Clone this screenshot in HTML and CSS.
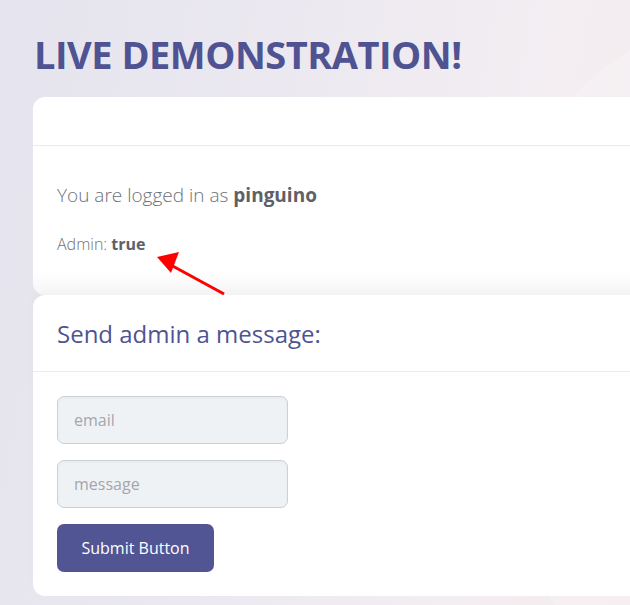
FILE: index.html
```html
<!DOCTYPE html>
<html>
<head>
<meta charset="utf-8">
<link rel="stylesheet" href="styles.css">
</head>
<body>
<div class="bg-shape"></div>
<main class="page">
  <h1 class="title">LIVE DEMONSTRATION!</h1>
  <section class="card card-status">
    <div class="card-header"></div>
    <div class="card-body">
      <p class="logged">You are logged in as <b>pinguino</b></p>
      <p class="admin">Admin: <b>true</b></p>
    </div>
    <svg class="arrow" width="80" height="50" viewBox="0 0 80 50">
      <line x1="69" y1="46" x2="14" y2="16" stroke="#ff0000" stroke-width="3"/>
      <polygon points="2,9 24,4 16,25" fill="#ff0000"/>
    </svg>
  </section>
  <section class="card card-form">
    <div class="card-header form-header">
      <h2 class="form-title">Send admin a message:</h2>
    </div>
    <form class="card-body form-body">
      <input class="field" type="text" placeholder="email">
      <input class="field" type="text" placeholder="message">
      <button class="submit" type="button">Submit Button</button>
    </form>
  </section>
</main>
</body>
</html>
```
FILE: styles.css
```css
html, body {
  margin: 0;
  padding: 0;
  width: 630px;
  height: 605px;
  overflow: hidden;
}
body {
  font-family: "Open Sans", "Noto Sans", sans-serif;
  background: linear-gradient(100deg, #e5e4ee 0%, #ebe8f0 40%, #f3eef2 75%, #f3ecef 100%);
  position: relative;
}
.bg-shape {
  position: absolute;
  left: 470px;
  top: 10px;
  width: 600px;
  height: 700px;
  border-radius: 50%;
  background: rgba(255,255,255,0.18);
}
.page {
  position: relative;
  padding: 0 0 0 33px;
  width: 597px;
  height: 605px;
  overflow: hidden;
}
.title {
  margin: 0;
  padding: 30px 0 0 1px;
  height: 97px;
  box-sizing: border-box;
  font-size: 38px;
  line-height: 48px;
  font-weight: 700;
  color: #4f5392;
  letter-spacing: -0.5px;
  white-space: nowrap;
}
.card {
  background: #fff;
  border-radius: 12px;
  position: relative;
  width: 680px;
}
.card-status {
  height: 198px;
  box-sizing: border-box;
  background: linear-gradient(#fff 0%, #fff 88%, #f7f7f8 100%);
}
.card-header {
  height: 48px;
  border-bottom: 1px solid #ebebee;
}
.card-body {
  padding: 24px 24px;
}
.logged {
  margin: 12px 0 0;
  font-size: 19px;
  line-height: 26px;
  font-weight: 300;
  color: #6e7177;
}
.logged b, .admin b {
  font-weight: 700;
  color: #5d6167;
}
.admin {
  margin: 25px 0 0;
  font-size: 16px;
  line-height: 22px;
  font-weight: 300;
  color: #6e7177;
}
.arrow {
  position: absolute;
  left: 122px;
  top: 151px;
}
.card-form {
  height: 301px;
  box-sizing: border-box;
  box-shadow: 0 -6px 14px rgba(0,0,0,0.025);
}
.form-header {
  height: 77px;
  box-sizing: border-box;
  display: flex;
  align-items: center;
  padding: 0 24px;
}
.form-title {
  margin: 0;
  font-size: 24px;
  font-weight: 400;
  color: #4f5392;
}
.form-body {
  display: flex;
  flex-direction: column;
  align-items: flex-start;
  gap: 16px;
  padding-top: 24px;
}
.field {
  width: 231px;
  height: 48px;
  box-sizing: border-box;
  border: 1px solid #cdd0d4;
  border-radius: 7px;
  background: #eff2f5;
  padding: 0 16px;
  font-family: "Open Sans", sans-serif;
  font-size: 16px;
  color: #555;
  box-shadow: inset 0 1px 3px rgba(0,0,0,0.04);
}
.field::placeholder {
  color: #a3a6ab;
}
.submit {
  width: 157px;
  height: 48px;
  border: none;
  border-radius: 7px;
  background: #525593;
  color: #fff;
  font-family: "Open Sans", sans-serif;
  font-size: 16px;
}
```
